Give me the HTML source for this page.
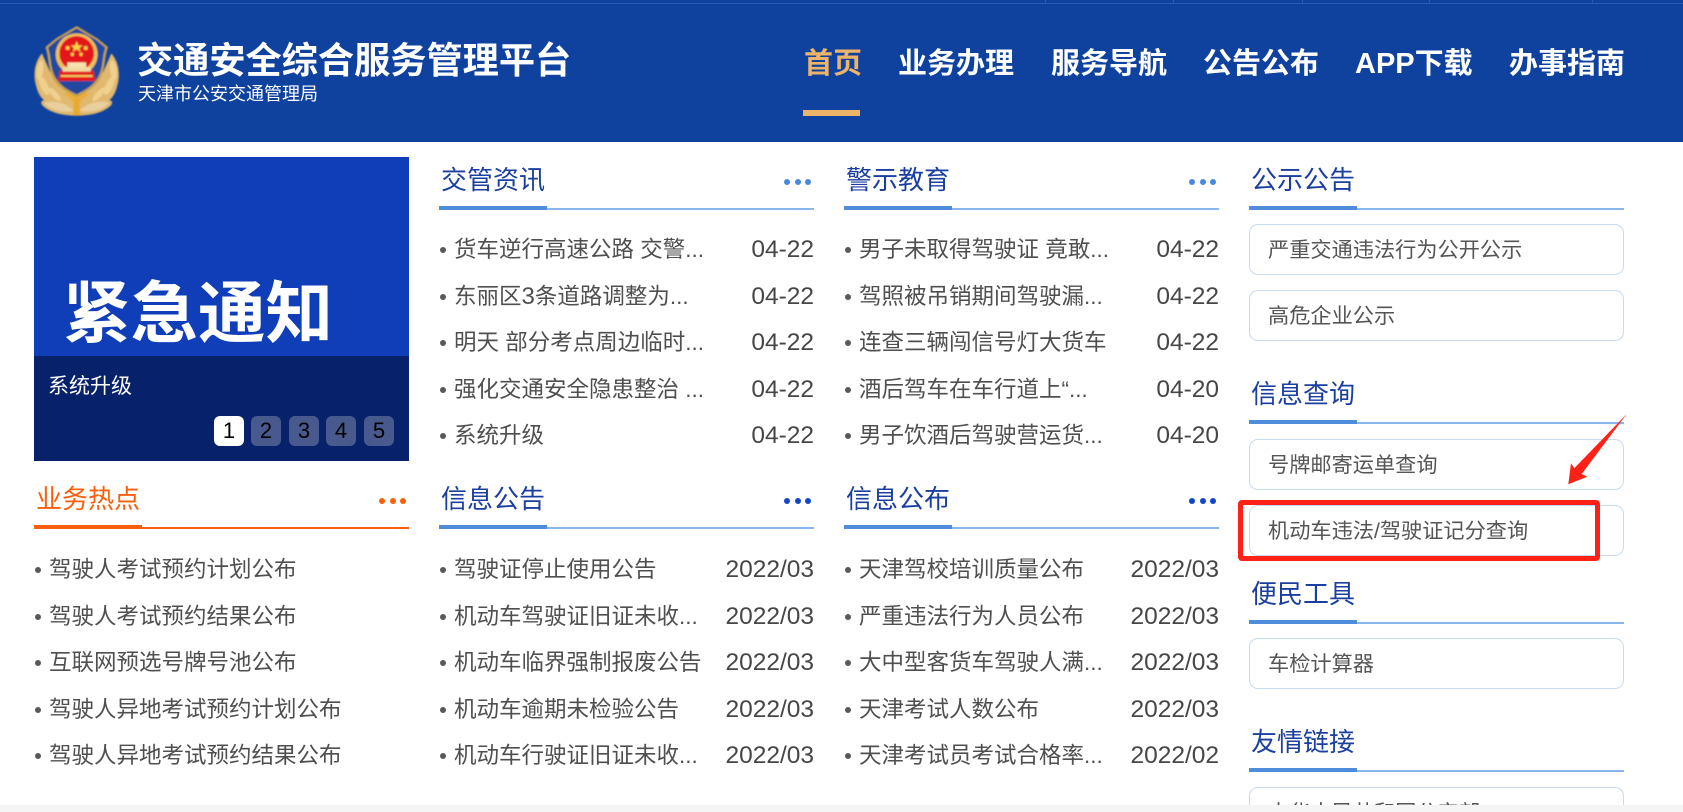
<!DOCTYPE html>
<html lang="zh-CN">
<head>
<meta charset="utf-8">
<title>交通安全综合服务管理平台</title>
<style>
html,body{margin:0;padding:0;background:#fff;width:1683px;height:812px;overflow:hidden}
#w{position:relative;width:1683px;height:812px;overflow:hidden;contain:paint;font-family:"Liberation Sans","Noto Sans CJK SC",sans-serif;color:#4a4a4a}
div,span,ul,li{box-sizing:border-box}
.a{position:absolute;white-space:nowrap}
.hd{position:absolute;left:0;top:0;width:1683px;height:142px;background:#0f419e}
.nav{position:absolute;top:44px;line-height:40px;height:40px;font-size:29px;font-weight:700;color:#fff;white-space:nowrap}
.h{position:absolute;width:375px;height:60px}
.h .t{position:absolute;left:2px;top:5px;line-height:40px;font-size:26px;color:#1a3f9e;white-space:nowrap}
.h .thin{position:absolute;left:0;right:0;top:53px;height:1.5px;background:#8ab6ee}
.h .thick{position:absolute;left:0;top:51px;width:108px;height:4px;background:#4f8ddc}
.h i{position:absolute;top:24px;width:6px;height:6px;border-radius:50%;background:#4a88e0}
.h.dk i{background:#1246c8}
.h.or .t{color:#f95f0c}.h.or .thin,.h.or .thick{background:#f95f0c}.h.or i{background:#f95f0c}
.l{position:absolute;width:375px;margin:0;padding:0;list-style:none}
.l li{position:relative;height:46.5px;line-height:46px;font-size:22.5px;color:#4f4f4f;padding-left:15px;white-space:nowrap}
.l li:before{content:"";position:absolute;left:1px;top:20px;width:6px;height:6px;border-radius:50%;background:#595959}
.l li b{position:absolute;right:0;top:0;font-weight:400;font-size:24.5px;color:#464646}
.l li u{text-decoration:none;font-size:24px}
.bx{position:absolute;left:1249px;width:375px;height:51px;border:1.5px solid #c8daf2;border-radius:9px;line-height:52px;padding-left:18px;font-size:21.2px;color:#555;white-space:nowrap;background:#fff}
.pg{position:absolute;top:416px;width:30px;height:30px;border-radius:6px;background:#47598d;color:#000;font-size:22px;line-height:30px;text-align:center}
</style>
</head>
<body>
<div id="w">
<div class="hd">
  <div class="a" style="left:0;top:3px;width:1683px;height:1px;background:#2a5ab6"></div>
  <div class="a" style="left:1045px;top:0;width:1px;height:3px;background:#2a5ab6"></div>
  <div class="a" style="left:1173px;top:0;width:1px;height:3px;background:#2a5ab6"></div>
  <div class="a" style="left:1302px;top:0;width:1px;height:3px;background:#2a5ab6"></div>
  <div class="a" style="left:1429px;top:0;width:1px;height:3px;background:#2a5ab6"></div>
  <div class="a" style="left:1592px;top:0;width:1px;height:3px;background:#2a5ab6"></div>

  <svg class="a" style="left:20px;top:15px" width="110" height="110" viewBox="0 0 330 330">
    <defs><filter id="bl" x="-10%" y="-10%" width="120%" height="120%"><feGaussianBlur stdDeviation="2"/></filter></defs>
    <g filter="url(#bl)">
      <!-- wreath base -->
      <path d="M66 115C48 135 40 165 45 198C50 225 58 245 72 255C62 258 62 264 66 270C88 292 125 302 170 302C215 302 252 292 274 270C278 264 278 258 268 255C282 245 290 225 295 198C300 165 292 135 274 115L250 170L170 250L90 170Z" fill="#e0b86e"/>
      <g fill="#efd08e">
        <ellipse cx="60" cy="165" rx="10" ry="30" transform="rotate(8 60 165)"/>
        <ellipse cx="72" cy="212" rx="11" ry="30" transform="rotate(-24 72 212)"/>
        <ellipse cx="104" cy="238" rx="9" ry="26" transform="rotate(-42 104 238)"/>
        <ellipse cx="280" cy="165" rx="10" ry="30" transform="rotate(-8 280 165)"/>
        <ellipse cx="268" cy="212" rx="11" ry="30" transform="rotate(24 268 212)"/>
        <ellipse cx="236" cy="238" rx="9" ry="26" transform="rotate(42 236 238)"/>
      </g>
      <path d="M72 264C100 254 135 262 164 288C130 292 92 288 72 264Z" fill="#e8cf9e"/>
      <path d="M268 264C240 254 205 262 176 288C210 292 248 288 268 264Z" fill="#e8cf9e"/>
      <path d="M130 238C150 245 165 262 170 290C175 262 190 245 210 238L170 225Z" fill="#eaae3a"/>
      <path d="M163 250H177L181 302H159Z" fill="#e9a92e"/>
      <!-- shield -->
      <path d="M170 33L108 70L76 96C86 125 84 150 92 172C102 205 126 226 170 246C214 226 238 205 248 172C256 150 254 125 264 96L232 70Z" fill="#c9a048"/>
      <path d="M170 40L111 75L84 98C93 125 91 150 99 171C109 201 131 220 170 238C209 220 231 201 241 171C249 150 247 125 256 98L229 75Z" fill="#24489f"/>
      <!-- emblem -->
      <circle cx="170" cy="118" r="63" fill="#eec05a"/>
      <circle cx="170" cy="115" r="52" fill="#e3141c"/>
      <path d="M120 166H220L226 198H114Z" fill="#e3141c"/>
      <path d="M128 156H212V170H128Z" fill="#f3d9a0"/>
      <path d="M142 142H198V156H142Z" fill="#f7e3b0"/>
      <path d="M122 180H218V186H122Z" fill="#f0c760"/>
      <path d="M170 78L175 91H188L178 99L182 111L170 103L158 111L162 99L152 91H165Z" fill="#f6d24a"/>
      <circle cx="143" cy="99" r="6" fill="#f6d24a"/><circle cx="197" cy="99" r="6" fill="#f6d24a"/>
      <circle cx="157" cy="118" r="5" fill="#f6d24a"/><circle cx="183" cy="118" r="5" fill="#f6d24a"/>
    </g>
  </svg>

  <div class="a" style="left:137px;top:38px;font-size:36.2px;font-weight:700;line-height:46px;color:#fff">交通安全综合服务管理平台</div>
  <div class="a" style="left:138px;top:82px;font-size:18px;line-height:24px;color:#fff">天津市公安交通管理局</div>

  <div class="nav" style="left:804px;color:#edb368">首页</div>
  <div class="nav" style="left:898px">业务办理</div>
  <div class="nav" style="left:1051px">服务导航</div>
  <div class="nav" style="left:1203px">公告公布</div>
  <div class="nav" style="left:1355px">APP下载</div>
  <div class="nav" style="left:1509px">办事指南</div>
  <div class="a" style="left:803px;top:110px;width:57px;height:6px;background:#edb368"></div>
</div>

<!-- banner -->
<div class="a" style="left:34px;top:157px;width:375px;height:199px;background:#103db8"></div>
<div class="a" style="left:34px;top:356px;width:375px;height:105px;background:#07226b"></div>
<div class="a" style="left:63px;top:275px;font-size:67.5px;font-weight:700;line-height:80px;color:#fff">紧急通知</div>
<div class="a" style="left:48px;top:372px;font-size:21px;line-height:30px;color:#fff">系统升级</div>
<div class="pg" style="left:214px;background:#fff">1</div>
<div class="pg" style="left:251px">2</div>
<div class="pg" style="left:289px">3</div>
<div class="pg" style="left:326px">4</div>
<div class="pg" style="left:364px">5</div>

<!-- row 1 headings -->
<div class="h" style="left:439px;top:155px"><div class="t">交管资讯</div><div class="thin"></div><div class="thick"></div><i style="left:345px"></i><i style="left:356px"></i><i style="left:366px"></i></div>
<div class="h" style="left:844px;top:155px"><div class="t" style="left:2px">警示教育</div><div class="thin"></div><div class="thick"></div><i style="left:345px"></i><i style="left:356px"></i><i style="left:366px"></i></div>

<ul class="l" style="left:439px;top:227px">
  <li>货车逆行高速公路 交警...<b>04-22</b></li>
  <li>东丽区<u>3</u>条道路调整为...<b>04-22</b></li>
  <li>明天 部分考点周边临时...<b>04-22</b></li>
  <li>强化交通安全隐患整治 ...<b>04-22</b></li>
  <li>系统升级<b>04-22</b></li>
</ul>
<ul class="l" style="left:844px;top:227px">
  <li>男子未取得驾驶证 竟敢...<b>04-22</b></li>
  <li>驾照被吊销期间驾驶漏...<b>04-22</b></li>
  <li>连查三辆闯信号灯大货车<b>04-22</b></li>
  <li>酒后驾车在车行道上“...<b>04-20</b></li>
  <li>男子饮酒后驾驶营运货...<b>04-20</b></li>
</ul>

<!-- row 2 -->
<div class="h or" style="left:34px;top:474px"><div class="t" style="left:2px">业务热点</div><div class="thin"></div><div class="thick"></div><i style="left:345px"></i><i style="left:356px"></i><i style="left:366px"></i></div>
<div class="h dk" style="left:439px;top:474px"><div class="t">信息公告</div><div class="thin"></div><div class="thick"></div><i style="left:345px"></i><i style="left:356px"></i><i style="left:366px"></i></div>
<div class="h dk" style="left:844px;top:474px"><div class="t">信息公布</div><div class="thin"></div><div class="thick"></div><i style="left:345px"></i><i style="left:356px"></i><i style="left:366px"></i></div>

<ul class="l" style="left:34px;top:547px">
  <li>驾驶人考试预约计划公布</li>
  <li>驾驶人考试预约结果公布</li>
  <li>互联网预选号牌号池公布</li>
  <li>驾驶人异地考试预约计划公布</li>
  <li>驾驶人异地考试预约结果公布</li>
</ul>
<ul class="l" style="left:439px;top:547px">
  <li>驾驶证停止使用公告<b>2022/03</b></li>
  <li>机动车驾驶证旧证未收...<b>2022/03</b></li>
  <li>机动车临界强制报废公告<b>2022/03</b></li>
  <li>机动车逾期未检验公告<b>2022/03</b></li>
  <li>机动车行驶证旧证未收...<b>2022/03</b></li>
</ul>
<ul class="l" style="left:844px;top:547px">
  <li>天津驾校培训质量公布<b>2022/03</b></li>
  <li>严重违法行为人员公布<b>2022/03</b></li>
  <li>大中型客货车驾驶人满...<b>2022/03</b></li>
  <li>天津考试人数公布<b>2022/03</b></li>
  <li>天津考试员考试合格率...<b>2022/02</b></li>
</ul>

<!-- right column -->
<div class="h" style="left:1249px;top:155px"><div class="t">公示公告</div><div class="thin"></div><div class="thick"></div></div>
<div class="bx" style="top:224px">严重交通违法行为公开公示</div>
<div class="bx" style="top:290px">高危企业公示</div>
<div class="h" style="left:1249px;top:369px"><div class="t">信息查询</div><div class="thin"></div><div class="thick"></div></div>
<div class="bx" style="top:439px">号牌邮寄运单查询</div>
<div class="bx" style="top:505px">机动车违法/驾驶证记分查询</div>
<div class="h" style="left:1249px;top:569px"><div class="t">便民工具</div><div class="thin"></div><div class="thick"></div></div>
<div class="bx" style="top:638px">车检计算器</div>
<div class="h" style="left:1249px;top:717px"><div class="t">友情链接</div><div class="thin"></div><div class="thick"></div></div>
<div class="bx" style="top:787px;height:25px">中华人民共和国公安部</div>

<!-- annotation -->
<div class="a" style="left:1238px;top:500px;width:362px;height:61px;border:5px solid #ff2116;border-radius:4px"></div>
<svg class="a" style="left:1560px;top:405px" width="75" height="85" viewBox="1560 405 75 85"><path d="M1626.7 414L1581.7 474L1587.3 476.7L1568.3 484.3L1571 463.3L1574.3 468.3Z" fill="#ff2116"/></svg>

<!-- bottom strip -->
<div class="a" style="left:0;top:805px;width:1683px;height:7px;background:#f5f5f5"></div>
</div>
</body>
</html>
